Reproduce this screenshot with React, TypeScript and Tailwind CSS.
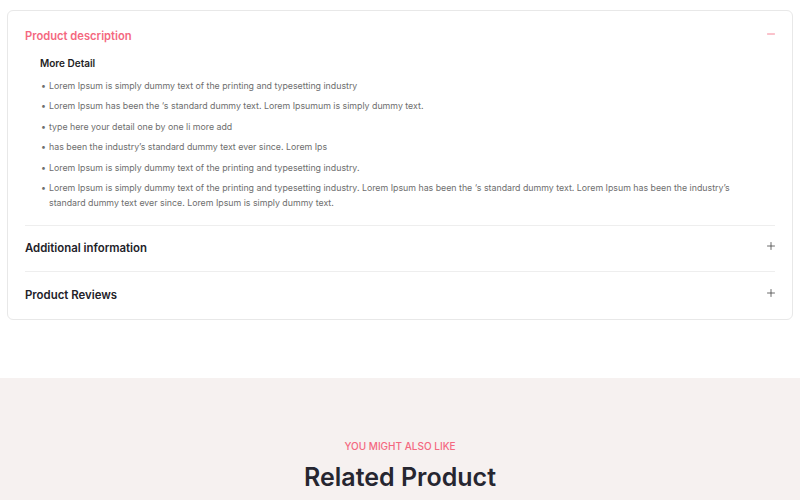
import { Minus, Plus } from 'lucide-react';

const details = [
  'Lorem Ipsum is simply dummy text of the printing and typesetting industry',
  'Lorem Ipsum has been the ‘s standard dummy text. Lorem Ipsumum is simply dummy text.',
  'type here your detail one by one li more add',
  'has been the industry’s standard dummy text ever since. Lorem Ips',
  'Lorem Ipsum is simply dummy text of the printing and typesetting industry.',
  'Lorem Ipsum is simply dummy text of the printing and typesetting industry. Lorem Ipsum has been the ‘s standard dummy text. Lorem Ipsum has been the industry’s standard dummy text ever since. Lorem Ipsum is simply dummy text.',
];

function CollapsedRow({ title, last }: { title: string; last?: boolean }) {
  return (
    <div className={`flex items-center justify-between ${last ? '' : 'border-b border-[#eeeeee]'} h-[46px]`}>
      <h3 className="text-[11.4px] font-semibold text-[#222229]">{title}</h3>
      <Plus size={12} strokeWidth={1.6} className="text-[#444] mr-[-2px] -mt-[5px]" />
    </div>
  );
}

export default function App() {
  return (
    <div className="min-h-[500px] bg-white" style={{ fontFamily: 'Inter, "Noto Sans", sans-serif' }}>
      <div className="px-[7px] pt-[10px]">
        <div className="rounded-[6px] border border-[#e8e8e8] px-[17px] pb-[1px]">
          <div className="border-b border-[#eeeeee] pb-[15px]">
            <div className="flex items-center justify-between pt-[17px]">
              <h2 className="text-[11.2px] font-semibold text-[#f4687f]">Product description</h2>
              <Minus size={12} strokeWidth={1.6} className="text-[#f4687f] mr-[-2px] -mt-[4px]" />
            </div>
            <div className="pl-[15px] pt-[11px]">
              <h4 className="text-[10px] font-semibold text-[#1e1e24]">More Detail</h4>
              <ul className="mt-[7px] flex flex-col gap-[5.5px] pr-[28px]">
                {details.map((d, i) => (
                  <li key={i} className="flex text-[8.8px] leading-[15px] text-[#6e6e6e]">
                    <span className="w-[9px] shrink-0 pl-[1px]">•</span>
                    <span>{d}</span>
                  </li>
                ))}
              </ul>
            </div>
          </div>
          <CollapsedRow title="Additional information" />
          <CollapsedRow title="Product Reviews" last />
        </div>
      </div>
      <div className="mt-[58px] bg-[#f6f1f0] pt-[61px] pb-[10px] text-center">
        <p className="text-[10px] font-medium uppercase text-[#f4687f]">You might also like</p>
        <h2 className="mt-[5px] text-[25px] font-semibold text-[#262630]">Related Product</h2>
      </div>
    </div>
  );
}
